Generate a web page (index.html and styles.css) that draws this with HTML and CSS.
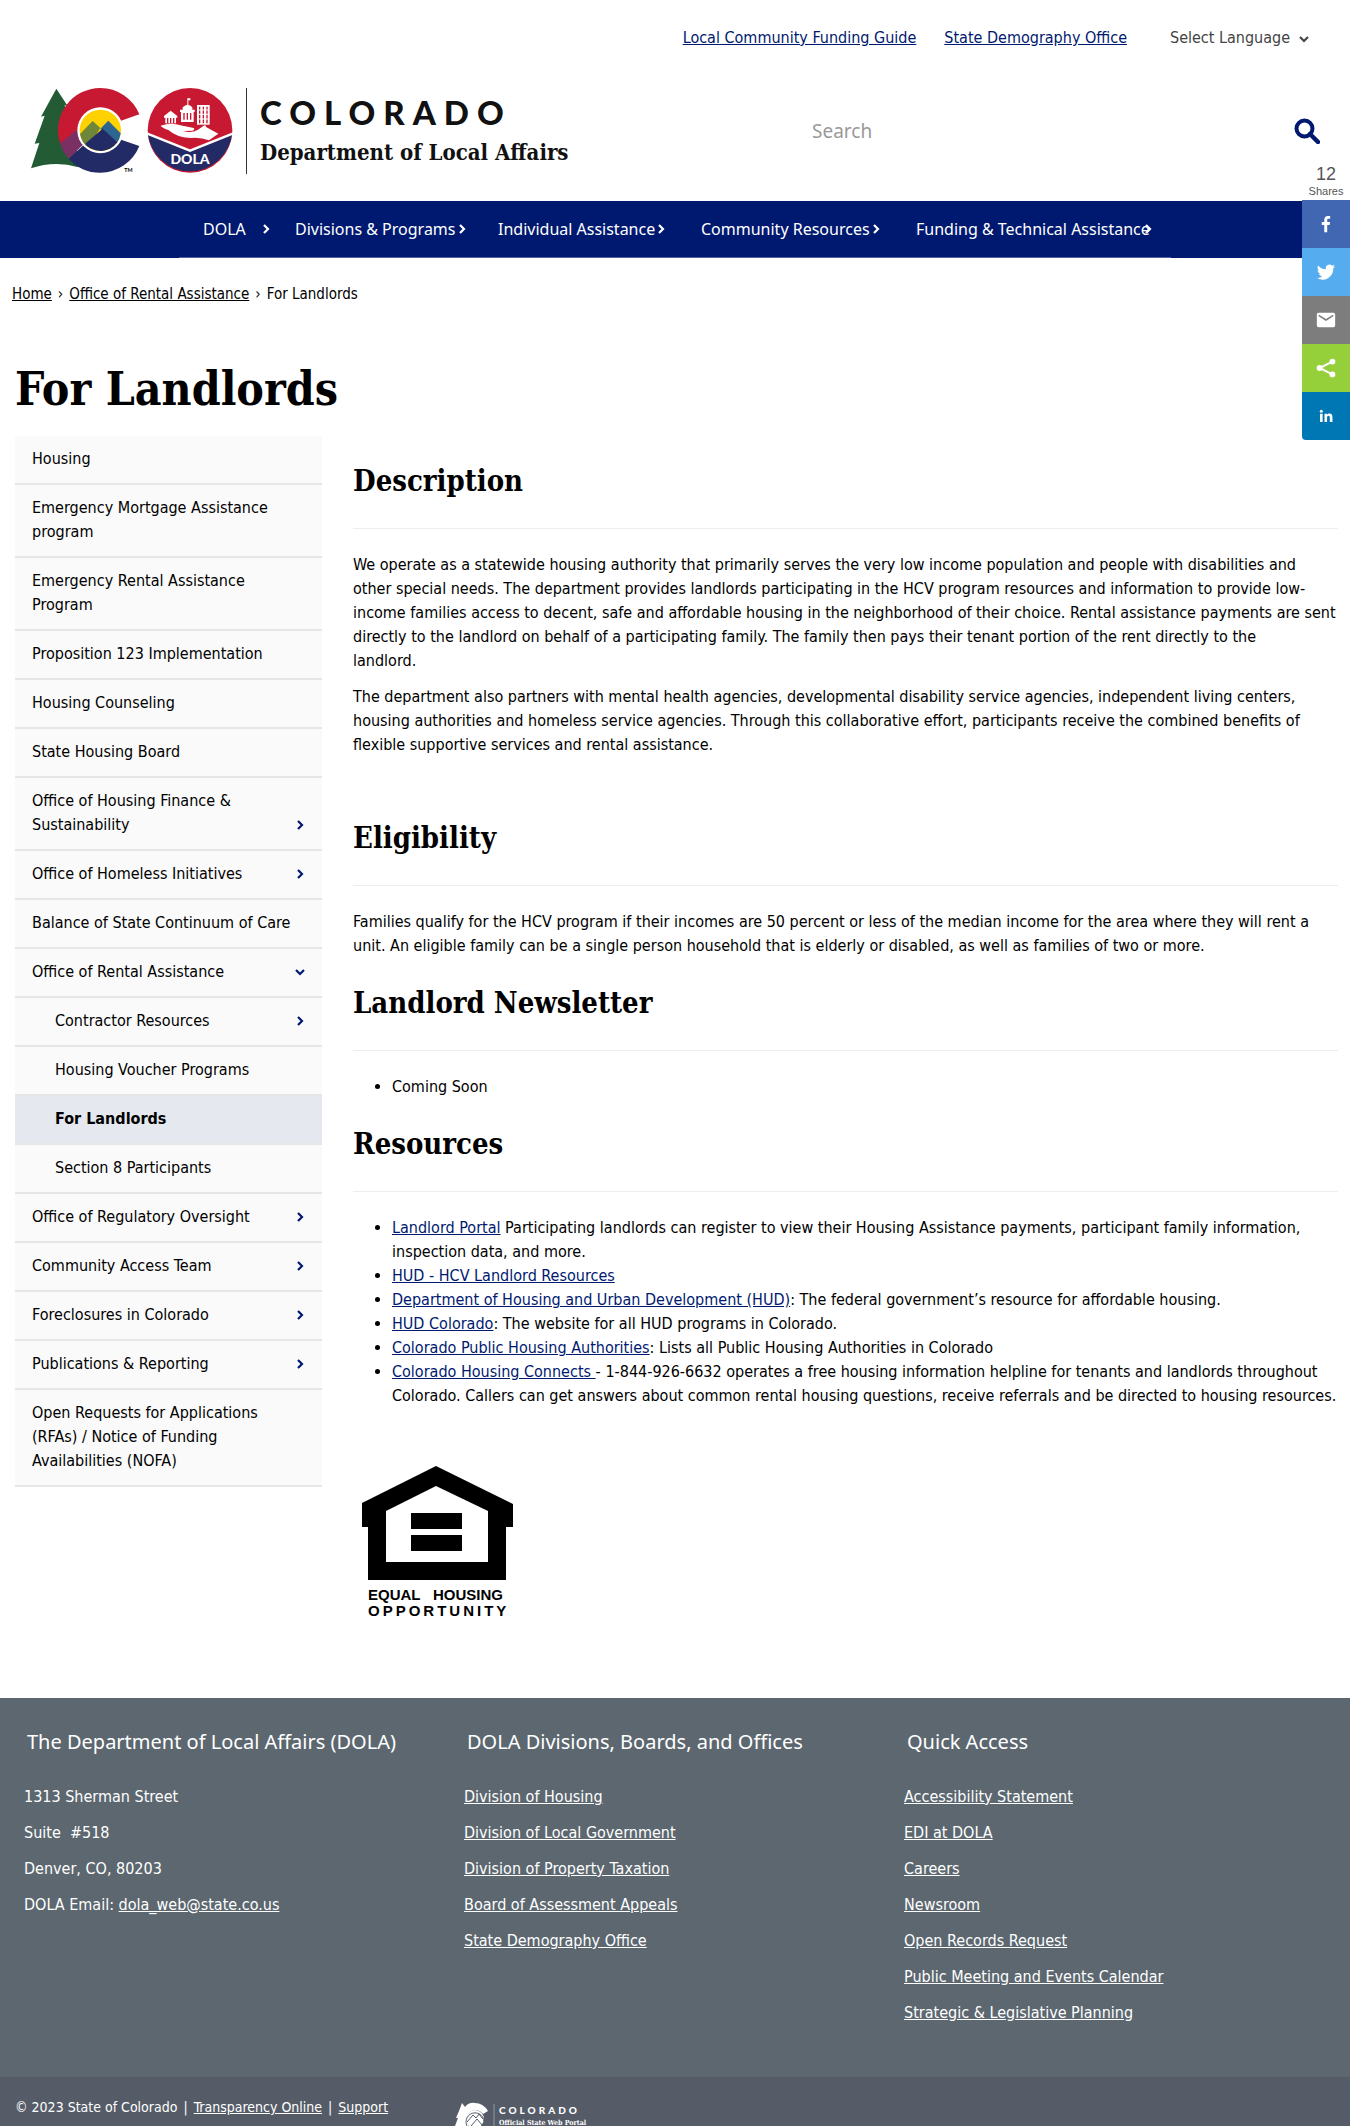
FILE: index.html
```html
<!DOCTYPE html>
<html lang="en">
<head>
<meta charset="utf-8">
<meta name="viewport" content="width=device-width, initial-scale=1">
<title>For Landlords | Department of Local Affairs</title>
<link rel="stylesheet" href="styles.css">
</head>
<body>
<svg class="sprite" aria-hidden="true">
  <symbol id="chev" viewBox="0 0 12 12"><path d="M4 2l4 4-4 4" fill="none" stroke="currentColor" stroke-width="2.2"/></symbol>
  <symbol id="chev-down" viewBox="0 0 12 12"><path d="M2 4l4 4 4-4" fill="none" stroke="currentColor" stroke-width="2.2"/></symbol>
</svg>

<header>
  <div class="topbar">
    <a href="#">Local Community Funding Guide</a>
    <a href="#">State Demography Office</a>
    <div class="language">
      <select aria-label="Select Language"><option>Select Language</option></select>
      <svg class="icon" aria-hidden="true"><use href="#chev-down"/></svg>
    </div>
  </div>

  <div class="brand-row">
    <a class="brand" href="#" aria-label="Colorado Department of Local Affairs">
      <svg class="brand-mark" viewBox="15 15 612 276" aria-hidden="true">
        <path fill="#235b35" d="M94 26L128 78 118 76 150 130 160 262Q90 240 18 265L43 189 29 191 59 107 48 110Z"/>
        <path fill="#c81932" d="M343 103A127 127 0 0 0 226 24A127 127 0 0 0 105 190L165 170 284 124Z"/>
        <path fill="#232b66" d="M343 198A127 127 0 0 1 226 278A127 127 0 0 1 131 236L225 150 284 178Z"/>
        <path fill="#7b3064" d="M105 190A127 127 0 0 0 131 236L182 186 165 142Z"/>
        <circle cx="226" cy="151" r="69" fill="#fff"/>
        <circle cx="226" cy="151" r="62" fill="#fdd200"/>
        <path fill="#708638" d="M165 162L203 123 226 144 190 202A62 62 0 0 1 165 162Z"/>
        <path fill="#2c6591" d="M226 146L250 122 287 160A62 62 0 0 1 275 190Z"/>
        <path fill="#232b66" d="M182 190L233 146 277 187A62 62 0 0 1 182 194Z"/>
        <text x="298" y="275" class="tm">TM</text>
        <circle cx="495" cy="151" r="127" fill="#c81932"/>
        <path fill="#232b66" d="M369 163L495 213 621 163A127 127 0 0 1 369 163Z"/>
        <path fill="none" stroke="#fff" stroke-width="7" d="M367 161L495 212 623 161"/>
        <g fill="#fff">
          <path d="M407 137Q440 126 466 136L506 144Q511 149 503 152L474 153Q500 161 519 149L536 137Q544 134 543 141L580 161 552 181Q525 170 495 174 455 172 430 150Q410 143 407 137Z"/>
          <path d="M417 108L437 92 457 108V113H453V130H421V113H417Z"/>
          <path d="M465 89H473V82Q489 66 502 82V89H509V96H506V126H468V96H465Z"/>
          <path d="M487 55H496V61H490V78H487Z"/>
          <path d="M516 75H554V134H516Z"/>
        </g>
        <path stroke="#c81932" stroke-width="4" fill="none" d="M428 114V129M437 114V129M446 114V129M477 99V119M487 99V119M497 99V119M524 80V130M535 80V130M546 80V130"/>
        <path stroke="#fff" stroke-width="3" d="M517 90H553M517 103H553M517 117H553"/>
        <text x="495" y="251" class="seal">DOLA</text>
      </svg>
      <span class="brand-text"><b>COLORADO</b><strong>Department of Local Affairs</strong></span>
    </a>
    <form class="search">
      <input type="search" placeholder="Search" aria-label="Search">
      <button type="button" aria-label="Submit search">
        <svg viewBox="0 0 26 26" width="26" height="26"><circle cx="10.500" cy="10.500" r="8" fill="none" stroke="currentColor" stroke-width="4"/><path d="M16 16L24 24" stroke="currentColor" stroke-width="4.500" stroke-linecap="round"/></svg>
      </button>
    </form>
  </div>

  <nav class="mainnav" aria-label="Main">
    <ul>
      <li class="short"><a href="#">DOLA <svg class="icon"><use href="#chev"/></svg></a></li>
      <li><a href="#">Divisions &amp; Programs <svg class="icon"><use href="#chev"/></svg></a></li>
      <li><a href="#">Individual Assistance <svg class="icon"><use href="#chev"/></svg></a></li>
      <li><a href="#">Community Resources <svg class="icon"><use href="#chev"/></svg></a></li>
      <li class="long"><a href="#">Funding &amp; Technical Assistance<svg class="icon"><use href="#chev"/></svg></a></li>
    </ul>
  </nav>
</header>

<aside class="share" aria-label="Share">
  <div class="count"><b>12</b><span>Shares</span></div>
  <a class="fb" href="#" aria-label="Facebook"><svg viewBox="0 0 24 24"><path d="M13.300 21v-8h2.700l.4-3.200h-3.100v-2c0-.9.300-1.500 1.600-1.500h1.600V3.400C16.200 3.300 15.200 3.200 14.100 3.200c-2.400 0-4 1.500-4 4.200v2.400H7.400V13h2.700v8z"/></svg></a>
  <a class="tw" href="#" aria-label="Twitter"><svg viewBox="0 0 24 24"><path d="M22 5.900c-.7.300-1.500.5-2.400.6.900-.5 1.500-1.300 1.800-2.300-.8.500-1.700.8-2.600 1a4.100 4.100 0 0 0-7 3.700C8.400 8.800 5.400 7.200 3.400 4.800a4.100 4.100 0 0 0 1.300 5.400c-.7 0-1.300-.2-1.900-.5 0 2 1.400 3.700 3.300 4.100-.6.200-1.200.2-1.900.1.500 1.600 2 2.800 3.800 2.800A8.200 8.200 0 0 1 2 18.400 11.600 11.600 0 0 0 19.900 8c.8-.6 1.500-1.300 2.100-2.100z"/></svg></a>
  <a class="em" href="#" aria-label="Email"><svg viewBox="0 0 24 24"><path d="M20 4H4a2 2 0 0 0-2 2v12a2 2 0 0 0 2 2h16a2 2 0 0 0 2-2V6a2 2 0 0 0-2-2zm0 4l-8 5-8-5V6l8 5 8-5z"/></svg></a>
  <a class="sh" href="#" aria-label="More"><svg viewBox="0 0 24 24"><path d="M19 5L5 12l14 7" fill="none" stroke="#fff" stroke-width="2.200"/><circle cx="19" cy="5" r="3.200"/><circle cx="5" cy="12" r="3.200"/><circle cx="19" cy="19" r="3.200"/></svg></a>
  <a class="li" href="#" aria-label="LinkedIn"><svg viewBox="0 0 24 24"><path d="M4 9h3.500v11H4zM10 9h3.300v1.500c.7-1.100 1.800-1.800 3.400-1.800 3 0 3.900 2 3.900 5V20h-3.500v-5.600c0-1.500-.2-2.800-1.800-2.800s-1.900 1.300-1.900 2.800V20H10z"/><circle cx="5.750" cy="5.700" r="2"/></svg></a>
</aside>

<nav class="crumbs" aria-label="Breadcrumb">
  <a href="#">Home</a><span>›</span><a href="#">Office of Rental Assistance</a><span>›</span>For Landlords
</nav>

<h1>For Landlords</h1>

<div class="layout">
  <nav class="side" aria-label="Section">
    <ul>
      <li><a href="#">Housing</a></li>
      <li><a href="#">Emergency Mortgage Assistance program</a></li>
      <li><a href="#">Emergency Rental Assistance Program</a></li>
      <li><a href="#">Proposition 123 Implementation</a></li>
      <li><a href="#">Housing Counseling</a></li>
      <li><a href="#">State Housing Board</a></li>
      <li><a href="#">Office of Housing Finance &amp; Sustainability</a><button aria-label="Expand"><svg class="icon"><use href="#chev"/></svg></button></li>
      <li><a href="#">Office of Homeless Initiatives</a><button aria-label="Expand"><svg class="icon"><use href="#chev"/></svg></button></li>
      <li><a href="#">Balance of State Continuum of Care</a></li>
      <li><a href="#">Office of Rental Assistance</a><button aria-label="Collapse"><svg class="icon"><use href="#chev-down"/></svg></button></li>
      <li class="sub"><a href="#">Contractor Resources</a><button aria-label="Expand"><svg class="icon"><use href="#chev"/></svg></button></li>
      <li class="sub"><a href="#">Housing Voucher Programs</a></li>
      <li class="sub current"><a href="#" aria-current="page">For Landlords</a></li>
      <li class="sub"><a href="#">Section 8 Participants</a></li>
      <li><a href="#">Office of Regulatory Oversight</a><button aria-label="Expand"><svg class="icon"><use href="#chev"/></svg></button></li>
      <li><a href="#">Community Access Team</a><button aria-label="Expand"><svg class="icon"><use href="#chev"/></svg></button></li>
      <li><a href="#">Foreclosures in Colorado</a><button aria-label="Expand"><svg class="icon"><use href="#chev"/></svg></button></li>
      <li><a href="#">Publications &amp; Reporting</a><button aria-label="Expand"><svg class="icon"><use href="#chev"/></svg></button></li>
      <li><a href="#">Open Requests for Applications (RFAs) / Notice of Funding Availabilities (NOFA)</a></li>
    </ul>
  </nav>

  <main>
    <h2>Description</h2>
    <p>We operate as a statewide housing authority that primarily serves the very low income population and people with disabilities and other special needs. The department provides landlords participating in the HCV program resources and information to provide low-income families access to decent, safe and affordable housing in the neighborhood of their choice. Rental assistance payments are sent directly to the landlord on behalf of a participating family. The family then pays their tenant portion of the rent directly to the<br>landlord.</p>
    <p>The department also partners with mental health agencies, developmental disability service agencies, independent living centers, housing authorities and homeless service agencies. Through this collaborative effort, participants receive the combined benefits of flexible supportive services and rental assistance.</p>
    <p>&nbsp;</p>
    <h2>Eligibility</h2>
    <p>Families qualify for the HCV program if their incomes are 50 percent or less of the median income for the area where they will rent a unit. An eligible family can be a single person household that is elderly or disabled, as well as families of two or more.</p>
    <h2>Landlord Newsletter</h2>
    <ul>
      <li>Coming Soon</li>
    </ul>
    <h2>Resources</h2>
    <ul>
      <li><a href="#">Landlord Portal</a> Participating landlords can register to view their Housing Assistance payments, participant family information, inspection data, and more.</li>
      <li><a href="#">HUD - HCV Landlord Resources</a></li>
      <li><a href="#">Department of Housing and Urban Development (HUD)</a>: The federal government’s resource for affordable housing.</li>
      <li><a href="#">HUD Colorado</a>: The website for all HUD programs in Colorado.</li>
      <li><a href="#">Colorado Public Housing Authorities</a>: Lists all Public Housing Authorities in Colorado</li>
      <li><a href="#">Colorado Housing Connects </a>- 1-844-926-6632 operates a free housing information helpline for tenants and landlords throughout Colorado. Callers can get answers about common rental housing questions, receive referrals and be directed to housing resources.</li>
    </ul>
    <svg class="eho" viewBox="0 0 170 160" role="img" aria-label="Equal Housing Opportunity">
      <path fill-rule="evenodd" d="M83 5L160 43V66H153V119H15V66H9V42ZM83 25L33 50V101H135V50Z"/>
      <path d="M58 52H109V68H58ZM58 74H109V90H58Z"/>
      <text x="15" y="139">EQUAL</text><text x="80" y="139">HOUSING</text>
      <text x="15" y="155" class="wide">OPPORTUNITY</text>
    </svg>
  </main>
</div>

<footer>
  <div class="columns">
    <section>
      <h3>The Department of Local Affairs (DOLA)</h3>
      <ul>
        <li>1313 Sherman Street</li>
        <li>Suite&nbsp; #518</li>
        <li>Denver, CO, 80203</li>
        <li>DOLA Email: <a href="#">dola_web@state.co.us</a></li>
      </ul>
    </section>
    <section>
      <h3>DOLA Divisions, Boards, and Offices</h3>
      <ul>
        <li><a href="#">Division of Housing</a></li>
        <li><a href="#">Division of Local Government</a></li>
        <li><a href="#">Division of Property Taxation</a></li>
        <li><a href="#">Board of Assessment Appeals</a></li>
        <li><a href="#">State Demography Office</a></li>
      </ul>
    </section>
    <section>
      <h3>Quick Access</h3>
      <ul>
        <li><a href="#">Accessibility Statement</a></li>
        <li><a href="#">EDI at DOLA</a></li>
        <li><a href="#">Careers</a></li>
        <li><a href="#">Newsroom</a></li>
        <li><a href="#">Open Records Request</a></li>
        <li><a href="#">Public Meeting and Events Calendar</a></li>
        <li><a href="#">Strategic &amp; Legislative Planning</a></li>
      </ul>
    </section>
  </div>
  <div class="legal">
    <p>© 2023 State of Colorado <i>|</i> <a href="#">Transparency Online</a> <i>|</i> <a href="#">Support</a></p>
    <svg class="portal" viewBox="0 0 136 24" role="img" aria-label="Colorado Official State Web Portal">
      <path fill="#fff" d="M7 1L10 5Q14 0 20 1 28 1 33 9L28 12Q25 8 20 8 12 9 12 17 12 21 14 24H0L3 16 1 16 4 9Z"/>
      <circle cx="20" cy="17" r="9" fill="#fff"/>
      <path d="M12 20L18 13 21 16 24 12 28 17M12 24A9 9 0 1 1 28 24M16 24L22 17 27 23" fill="none" stroke="#555c67"/>
      <path d="M39 2V24" stroke="#9298a0"/>
      <text x="44" y="12" class="p1">COLORADO</text>
      <text x="44" y="23" class="p2">Official State Web Portal</text>
    </svg>
  </div>
</footer>
</body>
</html>
```
FILE: styles.css
```css
:root {
  --navy: #001970;
  --slab: "DejaVu Serif Condensed", "DejaVu Serif", serif;
  --text: "DejaVu Sans Condensed", "DejaVu Sans", sans-serif;
  --head: "Noto Sans", sans-serif;
}
* { box-sizing: border-box; }
body {
  margin: 0;
  position: relative;
  font: 16px/24px var(--text);
  color: #000;
  background: #fff;
}
ul { list-style: none; margin: 0; padding: 0; }
a { color: inherit; }
button { border: 0; padding: 0; background: none; color: var(--navy); cursor: pointer; }
.sprite { display: none; }
.icon { display: block; flex: none; width: 12px; height: 12px; }

/* Header */
.topbar {
  display: flex;
  justify-content: flex-end;
  align-items: center;
  gap: 28px;
  height: 60px;
  padding: 16px 36px 0 0;
  color: var(--navy);
}
.language { position: relative; margin-left: 15px; color: #444; }
.language select {
  appearance: none;
  border: 0;
  background: none;
  padding: 0 16px 0 0;
  width: 144px;
  font: inherit;
  color: inherit;
}
.language .icon { position: absolute; right: 4px; top: 7px; }

.brand-row {
  display: flex;
  justify-content: space-between;
  align-items: center;
  height: 141px;
  padding: 0 30px 0 30px;
}
.brand { display: flex; align-items: center; text-decoration: none; color: #111; }
.brand-mark { width: 204px; height: 92px; }
.tm { font: 700 16px Lato, sans-serif; }
.seal { font: 900 42px Lato, sans-serif; fill: #fff; text-anchor: middle; }
.brand-text {
  display: flex;
  flex-direction: column;
  gap: 4px;
  height: 86px;
  margin-left: 12px;
  padding: 4px 0 0 13px;
  border-left: 1px solid #333;
  white-space: nowrap;
}
.brand-text b { font: 900 33px/40px Lato, sans-serif; letter-spacing: 8px; }
.brand-text strong { font: 700 22px/32px var(--slab); }
.search { display: flex; align-items: center; justify-content: space-between; width: 508px; }
.search input {
  flex: 1;
  min-width: 0;
  border: 0;
  padding: 0;
  background: none;
  font: 19px/32px var(--head);
}
.search input::placeholder { color: #999; opacity: 1; }
.search button { height: 26px; }

.mainnav { background: var(--navy); color: #fff; }
.mainnav ul {
  display: flex;
  width: 992px;
  max-width: 100%;
  margin: 0 auto;
  border-bottom: 1px solid #5560a0;
}
.mainnav li { padding-left: 24px; width: 203px; }
.mainnav li.short { width: 92px; }
.mainnav li.long { flex: 1; padding-left: 36px; }
.mainnav a {
  display: flex;
  align-items: center;
  height: 56px;
  font: 16px/24px var(--head);
  text-decoration: none;
  white-space: nowrap;
}
.mainnav .short a { gap: 14px; }
.mainnav .long .icon { margin-left: -8px; }

/* Share rail */
.share { position: absolute; top: 164px; right: 0; width: 48px; }
.count {
  height: 36px;
  text-align: center;
  font: 11px/12px "Liberation Sans", sans-serif;
  color: #555;
}
.count b { display: block; font-size: 18px; line-height: 21px; font-weight: 400; }
.share a { display: flex; align-items: center; justify-content: center; height: 48px; }
.share svg { width: 22px; height: 22px; fill: #fff; }
.share .li svg { width: 18px; height: 18px; }
.fb { background: #4267b2; }
.tw { background: #55acee; }
.em { background: #7d7d7d; }
.sh { background: #95d03a; }
.li { background: #0077b5; border-bottom-left-radius: 4px; }

/* Page */
.crumbs { padding: 24px 12px 0; font-size: 15px; }
.crumbs span { margin: 0 6px; }
h1 { margin: 52px 15px 16px; font: 700 46px/62px var(--slab); }
.layout {
  display: grid;
  grid-template-columns: 307px minmax(0, 1fr);
  gap: 31px;
  align-items: start;
  padding: 0 12px 0 15px;
}
.side li {
  display: flex;
  align-items: flex-end;
  padding: 11px 16px 12px 17px;
  background: #fafafa;
  border-bottom: 2px solid #e6e6e6;
}
.side a { flex: 1; text-decoration: none; }
.side button { height: 24px; }
.side .sub { padding-left: 40px; }
.side .current { background: #e5e8ef; font-weight: 700; }

h2 {
  margin: 25px 0 24px;
  padding-bottom: 27px;
  border-bottom: 1px solid #eee;
  font: 700 29px/40px var(--slab);
}
main p { margin: 0 0 12px; }
main ul { list-style: disc; padding-left: 39px; }
main a { color: var(--navy); }
.eho { display: block; width: 170px; height: 160px; margin: 53px 0 77px; }
.eho text { font: 700 15px "Liberation Sans", sans-serif; }
.eho .wide { letter-spacing: 3px; }

/* Footer */
footer { background: #5c6770; color: #fff; }
.columns {
  display: grid;
  grid-template-columns: repeat(3, 1fr);
  padding: 28px 15px 40px;
}
.columns section { padding-left: 9px; }
h3 { margin: 0 0 27px; padding-left: 3px; font: 20px/32px var(--head); }
.columns li { line-height: 24px; margin-bottom: 12px; }
.legal {
  display: grid;
  grid-template-columns: repeat(3, 1fr);
  align-items: start;
  padding: 18px 15px 0;
  background: #555c67;
  font-size: 14px;
}
.legal p { margin: 0; }
.legal i { margin: 0 2px; font-style: normal; }
.portal { display: block; width: 136px; height: 24px; margin: 7px 0 0; }
.p1 { font: 900 10px Lato, sans-serif; letter-spacing: 3px; fill: #fff; }
.p2 { font: 700 7px var(--slab); fill: #fff; }
```
